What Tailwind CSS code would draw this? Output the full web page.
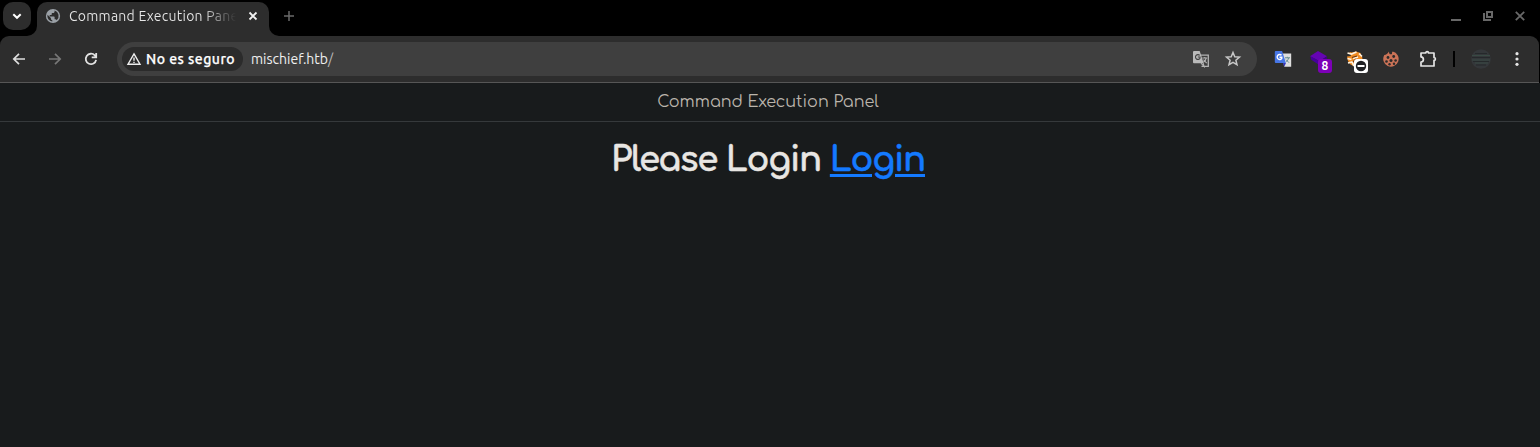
<!DOCTYPE html>
<html lang="es">
<head>
<meta charset="utf-8">
<title>Command Execution Panel</title>
<script src="https://cdn.jsdelivr.net/npm/@tailwindcss/browser@4"></script>
</head>
<body class="h-[447px] w-[1540px] overflow-hidden bg-black font-[Ubuntu,'Noto_Sans',sans-serif]">
<div class="flex h-full flex-col">
  <!-- Tab strip -->
  <header class="flex h-9 items-start bg-black">
    <button class="mt-[2px] ml-[3px] flex h-7 w-7 items-center justify-center rounded-[10px] bg-[#2d2d2d]">
      <svg class="h-4 w-4" viewBox="0 0 16 16" fill="none" stroke="#fff" stroke-width="2"><path d="M4.3 6.2 8 9.8l3.7-3.6"/></svg>
    </button>
    <div class="relative ml-[6px] flex h-[34px] w-[232px] self-end items-center rounded-t-[10px] bg-[#2d2d2d] pb-[6px] pl-[8px]">
      <svg class="absolute bottom-0 -left-[10px] h-[10px] w-[10px]" viewBox="0 0 10 10" fill="#2d2d2d"><path d="M10 0v10H0A10 10 0 0 0 10 0Z"/></svg>
      <svg class="absolute -right-[10px] bottom-0 h-[10px] w-[10px]" viewBox="0 0 10 10" fill="#2d2d2d"><path d="M0 0v10h10A10 10 0 0 1 0 0Z"/></svg>
      <svg class="h-4 w-4 shrink-0" viewBox="0 0 16 16"><circle cx="8" cy="8" r="7.1" fill="#9aa0a6"/><path d="M9.6 2.6v.8c0 .8-.6 1.5-1.4 1.5H6.8v1.4c0 .4-.3.7-.7.7H4.7v1.4h4.2c.4 0 .7.3.7.7v2.1h.7c.6 0 1.2.4 1.4 1a5.6 5.6 0 0 0-2.1-9.6ZM7.3 13.6v-1.4c-.8 0-1.4-.6-1.4-1.4v-.7L2.5 6.8a5.6 5.6 0 0 0 4.8 6.8Z" fill="#2d2d2d"/></svg>
      <span class="ml-2 w-[167px] overflow-hidden bg-linear-to-r from-[#e8e8e8] from-80% to-transparent bg-clip-text text-[14px] leading-5 tracking-[0.24px] whitespace-nowrap text-transparent">Command Execution Panel</span>
      <svg class="ml-[9px] h-4 w-4 shrink-0" viewBox="0 0 16 16" stroke="#f1f1f1" stroke-width="1.8"><path d="m4.5 4.5 7 7m0-7-7 7"/></svg>
    </div>
    <svg class="mt-2 ml-3 h-4 w-4" viewBox="0 0 16 16" stroke="#696969" stroke-width="1.5"><path d="M8 3v10M3 8h10"/></svg>
    <div class="mt-2 mr-3 ml-auto flex gap-4">
      <svg class="h-4 w-4" viewBox="0 0 16 16"><path d="M3 11h10v2H3z" fill="#686868"/></svg>
      <svg class="h-4 w-4" viewBox="0 0 16 16" fill="none" stroke="#686868" stroke-width="2"><path d="M7 4h5v5H7zM4 5v7h7"/></svg>
      <svg class="h-4 w-4" viewBox="0 0 16 16" stroke="#686868" stroke-width="1.8"><path d="m3.8 3.8 8.4 8.4m0-8.4-8.4 8.4"/></svg>
    </div>
  </header>
  <!-- Toolbar -->
  <div class="mr-px flex h-[47px] items-center rounded-t-[9px] border-b border-[#565656] bg-[#2d2d2d]">
    <div class="ml-[10px] flex w-[107px] gap-[18px]">
      <svg class="h-[18px] w-[18px]" viewBox="0 0 18 18" fill="none" stroke="#dedede" stroke-width="1.7"><path d="M15 9H4.2M9 3.8 3.8 9 9 14.2"/></svg>
      <svg class="h-[18px] w-[18px]" viewBox="0 0 18 18" fill="none" stroke="#777" stroke-width="1.7"><path d="M3 9h10.8M9 3.8 14.2 9 9 14.2"/></svg>
      <svg class="h-[18px] w-[18px]" viewBox="0 0 18 18" fill="none" stroke="#e3e3e3" stroke-width="1.8"><path d="M14.1 9.8A5.2 5.2 0 1 1 12.8 5.4l1 1.1M14.2 2.9v4.5H9.7"/></svg>
    </div>
    <div class="flex h-[34px] w-[1140px] items-center rounded-full bg-[#3f3f3f] pl-[5px]">
      <div class="flex h-6 w-[121px] items-center rounded-full bg-[#2b2b2b] pl-1">
        <svg class="h-4 w-4" viewBox="0 0 16 16" fill="none" stroke="#eee" stroke-width="1.4"><path d="M8 2.8 14 13.2H2Z"/><path d="M8 6.4v3.3m0 1v1.4"/></svg>
        <span class="ml-1 text-[14px] leading-5 font-medium tracking-[0.48px] whitespace-nowrap text-white [-webkit-text-stroke:0.25px_currentColor]">No es seguro</span>
      </div>
      <span class="ml-2 text-[14px] leading-5 whitespace-nowrap text-[#f0f0f0]">mischief.htb<span class="text-[#b8b8b8]">/</span></span>
      <svg class="ml-auto h-[18px] w-[18px]" viewBox="0 0 18 18"><path d="M8 5.2h8.3v11.1H9.5" fill="none" stroke="#b3b3b3" stroke-width="1.3"/><path d="M2 1h5.7l4 12.2H2a1 1 0 0 1-1-1V2a1 1 0 0 1 1-1Z" fill="#b9b9b9"/><path d="M7.7 5.4A2.4 2.4 0 1 0 8 8.2V7H5.8" fill="none" stroke="#404040" stroke-width="1.1"/><path d="m9 13.2 3 3.2-.8-3.2M10.3 8h5M12.8 7v1m1.4.1c-.4 1.8-1.3 3-2.8 4.1m.1-2.5 3.2 3.4" fill="none" stroke="#b3b3b3" stroke-width="1.1"/></svg>
      <svg class="mr-[15px] ml-[14px] h-[18px] w-[18px]" viewBox="0 0 18 18" fill="none" stroke="#c7c7c7" stroke-width="1.5"><path d="m9 2.5 1.8 4.2 4.7.4-3.6 3.1 1.1 4.5L9 12.3l-4 2.4 1.1-4.5-3.6-3.1 4.7-.4Z"/></svg>
    </div>
    <div class="ml-[17px] flex items-center">
      <svg class="h-[18px] w-[18px]" viewBox="0 0 18 18"><path d="M8 3.5h9.2v13.2h-7Z" fill="#dedede"/><path d="M1.8 1h6.3l3.8 12H1.8a1 1 0 0 1-1-1V2a1 1 0 0 1 1-1Z" fill="#4776e6"/><path d="M7.5 5.3a2.5 2.5 0 1 0 .3 3V7.2H5.5" fill="none" stroke="#fff" stroke-width="1.4"/><path d="M9 13h3l-1.8 3.7Z" fill="#3435bd"/><path d="M11 7.8h5M13.3 6.8v1m1.2.2c-.4 1.8-1 2.8-2.2 3.7m-.3-2 3 3" fill="none" stroke="#638c8e"/></svg>
      <svg class="ml-[18px] h-7 w-6" viewBox="0 0 24 28"><path d="M8 6 17 11.2l-7.5 5L0 11.200Z" fill="#6504b3"/><path d="m.5 11.200 9 5v4L1 14.500Z" fill="#47009c"/><path d="m9.500 16.200 7.500-5v4l-7.500 5Z" fill="#3c0084"/><rect x="8" y="14" width="14" height="14" rx="3" fill="#7d00b7"/><text x="15" y="25" text-anchor="middle" font-size="12" font-weight="700" fill="#fff" font-family="Ubuntu, Noto Sans, sans-serif">8</text></svg>
      <svg class="ml-[12px] h-7 w-6" viewBox="0 0 24 28"><path d="M3.500 7 6 7.500l4-1L14.500 8l1 3 1 2-1 4-3 3-5 1-3-1.500-2.500-3.500L1 11.500l4-.5Z" fill="#f08b22"/><path d="m1.500 8 4 1 5-2m-9 6.500 4 1m-3.500 3.500 4-1 2 4m5-12.500 3 3m-9 2 5-1.500" fill="none" stroke="#fff2de" stroke-width="1.700"/><path d="m6 12.500 5-1.500m-4 6 3-3" stroke="#6b3712" stroke-width="1.300"/><rect x="8" y="14" width="14" height="14" rx="3" fill="#fff"/><circle cx="15" cy="21" r="5.200" fill="#202124"/><path d="M11.500 20h7v2h-7Z" fill="#fff"/></svg>
      <svg class="ml-[12px] h-[18px] w-[18px]" viewBox="0 0 18 18"><path d="M7 1.600c-.2 2 1.300 3.500 3 2.300C9.900 2.700 10 2 10.700 1.400A7.700 7.700 0 1 1 2.300 5C4.300 5 5.500 4 7 1.600Z" fill="#cb7357"/><g fill="#2b2b2b"><circle cx="6" cy="7.500" r="1.400"/><circle cx="11.700" cy="6.500" r="1.400"/><circle cx="4.500" cy="11.500" r="1.300"/><circle cx="9" cy="10.500" r="1.500"/><circle cx="13.600" cy="10.500" r="1.300"/><circle cx="7.500" cy="14.300" r="1.200"/><circle cx="12" cy="13.800" r="1.200"/></g></svg>
      <svg class="ml-[18px] h-[20px] w-[20px]" viewBox="0 0 20 20" fill="none" stroke="#e5e5e5" stroke-width="1.7" stroke-linejoin="round"><path d="M3 4h4.700a1.400 1.400 0 0 1 2.800 0H16v4.500a1.400 1.400 0 0 1 0 2.800V17H3v-3.900c3.200-.4 3.200-4.800 0-5.200Z"/></svg>
    </div>
    <div class="ml-[15px] h-4 w-[2px] bg-black"></div>
    <svg class="ml-[16px] h-5 w-5" viewBox="0 0 20 20"><circle cx="10" cy="10" r="9.800" fill="#34373a"/><path d="M1 6.500h18M1 11h18M4 14h13" stroke="#394a44"/><path d="M4 4.500h12M1 8.500h18M2 12.500h16M5 16h10" stroke="#25292b"/></svg>
    <svg class="ml-[17px] h-[18px] w-[18px]" viewBox="0 0 18 18" fill="#e5e5e5"><circle cx="9" cy="3.700" r="1.600"/><circle cx="9" cy="9" r="1.600"/><circle cx="9" cy="14.300" r="1.600"/></svg>
  </div>
  <!-- Page -->
  <main class="flex-1 bg-[#181b1c] text-center font-[Comfortaa,Quicksand,Lato,sans-serif]">
    <div class="h-[39px] border-b border-[#35393b] pr-1 pt-[7px] text-[16px] leading-6 text-[#bbb5ac]">Command Execution Panel</div>
    <h1 class="pt-[17px] pr-1 text-[34px] leading-[42px] font-bold tracking-[-1.2px] whitespace-nowrap text-[#e8e6e3] [-webkit-text-stroke:0.4px_currentColor]">Please Login <a class="text-[#147aff] underline decoration-[3px] underline-offset-[3px]" href="#">Login</a></h1>
  </main>
</div>
</body>
</html>
